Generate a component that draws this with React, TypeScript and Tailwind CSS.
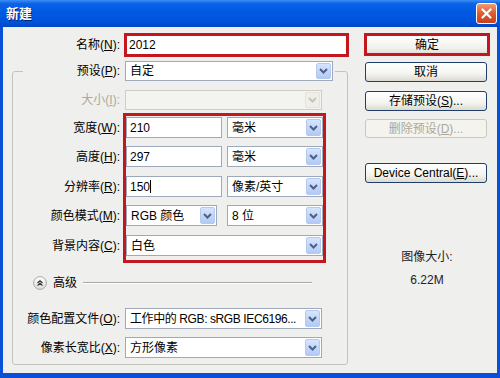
import React from "react";
import clsx from "clsx";

function Chevron({ disabled }: { disabled?: boolean }) {
  return (
    <svg width="9" height="6" viewBox="0 0 9 6">
      <path d="M1 1l3.5 3.5L8 1" stroke={disabled ? "#c4c3bc" : "#4d6185"} strokeWidth="2" fill="none" />
    </svg>
  );
}

function Combo({
  children,
  className,
  textClass,
  disabled,
}: {
  children?: React.ReactNode;
  className?: string;
  textClass?: string;
  disabled?: boolean;
}) {
  return (
    <div
      className={clsx(
        "flex items-stretch border",
        disabled ? "border-[#cfcdc4] bg-[#f3f3ef]" : "border-[#9eaabb] bg-white",
        className
      )}
    >
      <div className={clsx("flex-1 flex items-center pl-[4px] text-[12px] whitespace-nowrap overflow-hidden", textClass)}>
        {children}
      </div>
      <div
        className={clsx(
          "w-[15px] m-[1px] rounded-[2px] flex items-center justify-center border",
          disabled
            ? "border-[#e4e3dc] bg-[#efeee9]"
            : "border-[#b5c9f0] bg-[linear-gradient(180deg,#d6e4fd,#b2caf6)]"
        )}
      >
        <Chevron disabled={disabled} />
      </div>
    </div>
  );
}

function Field({ children, className }: { children?: React.ReactNode; className?: string }) {
  return (
    <div className={clsx("flex items-center border border-[#9eaabb] bg-white pl-[3px] text-[12px]", className)}>
      {children}
    </div>
  );
}

function Lbl({ t, k, className }: { t: string; k: string; className?: string }) {
  return (
    <div className={clsx("w-[110px] pr-[3px] text-right text-[12px] flex items-center justify-end whitespace-nowrap", className)}>
      {t}(<u>{k}</u>):
    </div>
  );
}

function Btn({ children, className, disabled }: { children?: React.ReactNode; className?: string; disabled?: boolean }) {
  return (
    <div
      className={clsx(
        "ml-[1px] w-[122px] rounded-[3px] border flex items-center justify-center text-[12px] whitespace-nowrap",
        disabled
          ? "border-[#cbc9bd] bg-[#f4f3ee] text-[#aca899]"
          : "border-[#1f3f6a] bg-[linear-gradient(180deg,#ffffff_0%,#f4f4f0_60%,#dcd9d0_100%)] text-black",
        className
      )}
    >
      {children}
    </div>
  );
}

export default function App() {
  return (
    <div className="w-[500px] h-[378px] flex flex-col bg-[#0a4fd8] font-['Liberation_Sans','Noto_Sans_CJK_SC',sans-serif] text-black overflow-hidden">
      {/* Title bar */}
      <div className="h-[27px] flex items-center justify-between pl-[6px] pr-[3px] bg-[linear-gradient(180deg,#3d8ef7_0%,#0a62e6_14%,#0058e2_50%,#0052d8_85%,#0047c4_100%)]">
        <span className="text-white font-bold text-[13px] [text-shadow:1px_1px_#0a1f74]">新建</span>
        <div className="w-[21px] h-[21px] rounded-[3px] border border-white bg-[linear-gradient(180deg,#f09a76,#e05a2e_50%,#c9401a)] flex items-center justify-center">
          <svg width="11" height="11" viewBox="0 0 11 11">
            <path d="M1.5 1.5l8 8M9.5 1.5l-8 8" stroke="white" strokeWidth="2.2" strokeLinecap="round" />
          </svg>
        </div>
      </div>

      {/* Body */}
      <div className="flex-1 mx-[3px] mb-[5px] bg-[#efefed] flex pl-[9px] pt-[6px]">
        {/* Left column */}
        <div className="w-[337px] flex flex-col">
          {/* Name row */}
          <div className="flex h-[24px] items-stretch">
            <div className="w-[112px] pr-[4px] text-right text-[12px] flex items-center justify-end">
              名称(<u>N</u>):
            </div>
            <div className="w-[225px] border-[3px] border-[#c3161e] bg-white flex items-center pl-[2px] text-[12px]">
              2012
            </div>
          </div>

          {/* Group box */}
          <fieldset className="mt-[4px] w-[336px] border border-[#c4c4be] rounded-[3px] pb-[6px]">
            <legend className="ml-[10px] pr-[2px]">
              <div className="flex h-[20px] items-stretch">
                <div className="w-[100px] pr-[3px] text-right text-[12px] flex items-center justify-end">
                  预设(<u>P</u>):
                </div>
                <Combo className="ml-[2px] w-[208px]">自定</Combo>
              </div>
            </legend>

            {/* Size row */}
            <div className="mt-[9px] flex h-[20px] items-stretch">
              <Lbl t="大小" k="I" className="text-[#aca899]" />
              <Combo disabled className="ml-[2px] w-[197px]" />
            </div>

            {/* Highlighted section */}
            <div className="mt-[3px] flex">
              <div className="w-[110px] pt-[4px] flex flex-col">
                <Lbl t="宽度" k="W" className="h-[21px]" />
                <Lbl t="高度" k="H" className="h-[21px] mt-[8px]" />
                <Lbl t="分辨率" k="R" className="h-[21px] mt-[9px]" />
                <Lbl t="颜色模式" k="M" className="h-[21px] mt-[8px]" />
                <Lbl t="背景内容" k="C" className="h-[21px] mt-[9px]" />
              </div>
              <div className="w-[203px] border-[3px] border-[#c3161e] flex flex-col pt-[1px] pb-[4px]">
                <div className="flex h-[21px] gap-[5px]">
                  <Field className="w-[96px]">210</Field>
                  <Combo className="w-[96px]">毫米</Combo>
                </div>
                <div className="flex h-[21px] gap-[5px] mt-[8px]">
                  <Field className="w-[96px]">297</Field>
                  <Combo className="w-[96px]">毫米</Combo>
                </div>
                <div className="flex h-[21px] gap-[5px] mt-[9px]">
                  <Field className="w-[96px]">
                    150<span className="inline-block w-px h-[13px] bg-black" />
                  </Field>
                  <Combo className="w-[96px]">像素/英寸</Combo>
                </div>
                <div className="flex h-[21px] gap-[10px] mt-[8px]">
                  <Combo className="w-[91px]">RGB 颜色</Combo>
                  <Combo className="w-[96px]">8 位</Combo>
                </div>
                <div className="flex h-[21px] mt-[9px]">
                  <Combo className="w-[197px]">白色</Combo>
                </div>
              </div>
            </div>

            {/* Advanced */}
            <div className="mt-[13px] ml-[20px] flex items-center h-[14px]">
              <svg width="14" height="14" viewBox="0 0 14 14">
                <defs>
                  <linearGradient id="cg" x1="0" y1="0" x2="0" y2="1">
                    <stop offset="0" stopColor="#ffffff" />
                    <stop offset="1" stopColor="#dcdcd6" />
                  </linearGradient>
                </defs>
                <circle cx="7" cy="7" r="6.4" fill="url(#cg)" stroke="#a8a8a2" strokeWidth="1" />
                <path d="M4.5 7l2.5-2.3L9.5 7M4.5 9.6l2.5-2.3 2.5 2.3" stroke="#333" strokeWidth="1.2" fill="none" />
              </svg>
              <span className="ml-[6px] text-[12px]">高级</span>
              <div className="ml-[6px] w-[229px] h-[2px] border-t border-[#a8a8a4] border-b border-b-white" />
            </div>

            <div className="mt-[18px] flex h-[21px] items-stretch">
              <Lbl t="颜色配置文件" k="O" />
              <Combo className="ml-[2px] w-[197px]" textClass="pl-[3px] tracking-[-0.4px] text-[11.5px]">
                工作中的 RGB: sRGB IEC6196...
              </Combo>
            </div>
            <div className="mt-[8px] flex h-[21px] items-stretch">
              <Lbl t="像素长宽比" k="X" />
              <Combo className="ml-[2px] w-[197px]">方形像素</Combo>
            </div>
          </fieldset>
        </div>

        {/* Right column */}
        <div className="ml-[15px] w-[126px] flex flex-col">
          <div className="h-[23px] w-[126px] border-[3px] border-[#c3161e] bg-[linear-gradient(180deg,#ffffff,#f1f1ed_70%,#e2e0d8)] flex items-center justify-center text-[12px]">
            确定
          </div>
          <Btn className="mt-[6px] h-[20px]">取消</Btn>
          <Btn className="mt-[9px] h-[20px]">
            存储预设(<u>S</u>)...
          </Btn>
          <Btn disabled className="mt-[8px] h-[19px]">
            删除预设(<u>D</u>)...
          </Btn>
          <Btn className="mt-[25px] h-[20px]">
            Device Central(<u>E</u>)...
          </Btn>
          <div className="mt-[66px] text-center text-[12px] leading-[16px] text-[#222]">图像大小:</div>
          <div className="mt-[7px] text-center text-[12px] leading-[16px] text-[#222]">6.22M</div>
        </div>
      </div>
    </div>
  );
}
